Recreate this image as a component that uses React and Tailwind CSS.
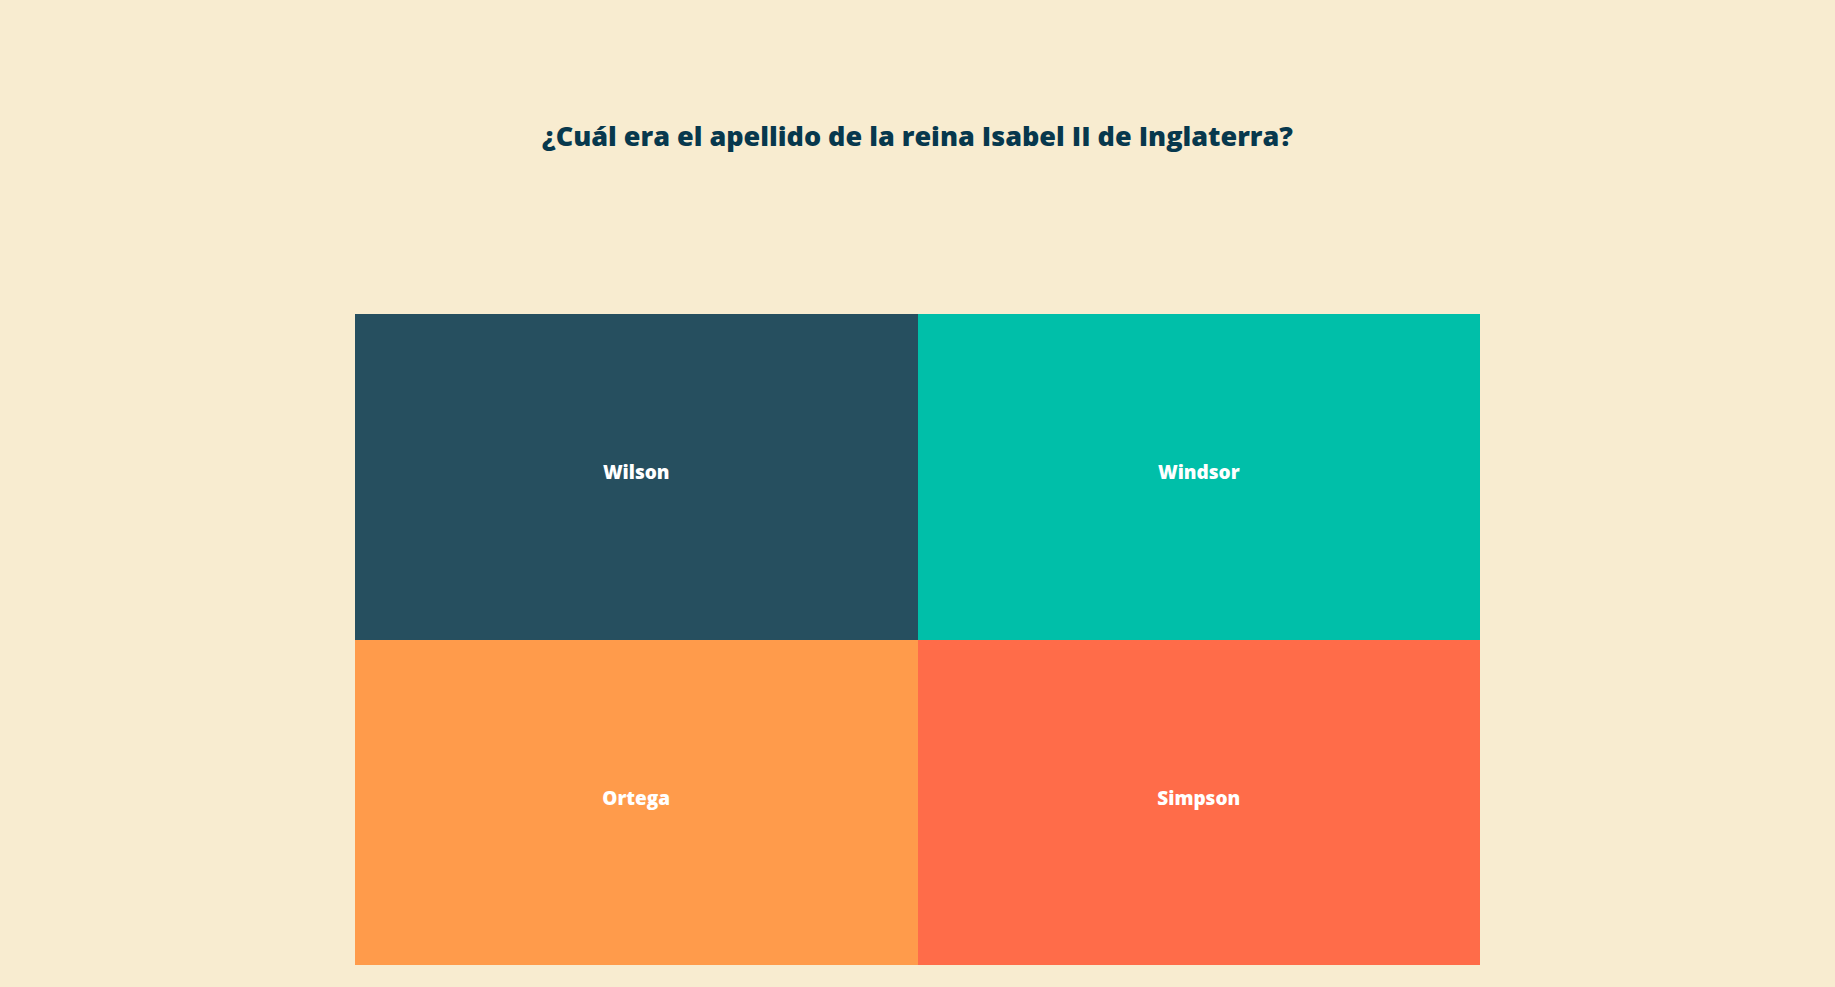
const answers = [
  { label: 'Wilson', color: 'bg-[#264f5f]' },
  { label: 'Windsor', color: 'bg-[#00bfa9]' },
  { label: 'Ortega', color: 'bg-[#ff9b4b]' },
  { label: 'Simpson', color: 'bg-[#ff6c49]' },
];

export default function App() {
  return (
    <main className="flex min-h-screen flex-col items-center bg-[#f8ecd0] font-['Open_Sans',sans-serif]">
      <h1 className="px-4 pt-29 pb-[158px] text-center text-[27px] leading-10 font-extrabold text-[#07384d]">
        ¿Cuál era el apellido de la reina Isabel II de Inglaterra?
      </h1>
      <div className="grid w-full max-w-[1125px] grid-cols-2">
        {answers.map(({ label, color }) => (
          <button
            key={label}
            type="button"
            className={`h-[33vh] cursor-pointer pb-2.5 text-center text-[19px] leading-6 font-extrabold text-white ${color}`}
          >
            {label}
          </button>
        ))}
      </div>
    </main>
  );
}
